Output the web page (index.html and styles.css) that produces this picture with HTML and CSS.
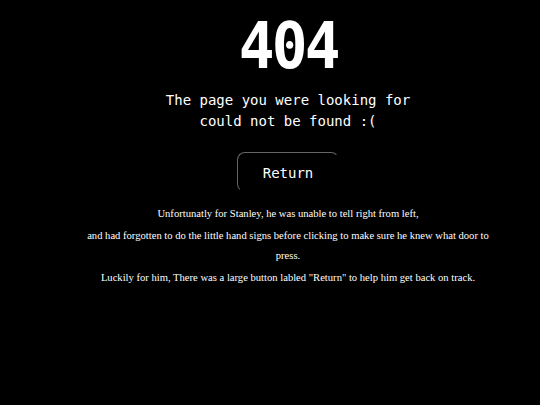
FILE: index.html
```html
<!DOCTYPE html>
<html lang="en">
<head>
<meta charset="utf-8">
<title>404 - Page not found</title>
<link rel="stylesheet" href="styles.css">
</head>
<body>
  <main class="page">
    <h1 class="code">404</h1>
    <h2 class="subtitle">The page you were looking for<br>could not be found :(</h2>
    <a class="return-btn" href="#">Return</a>
    <div class="story">
      <p>Unfortunatly for Stanley, he was unable to tell right from left,</p>
      <p>and had forgotten to do the little hand signs before clicking to make sure he knew what door to press.</p>
      <p>Luckily for him, There was a large button labled "Return" to help him get back on track.</p>
    </div>
  </main>
</body>
</html>
```

FILE: styles.css
```css
html, body {
  margin: 0;
  background: #000;
  color: #fff;
}

body {
  width: 540px;
  height: 405px;
  overflow: hidden;
}

.page {
  display: flex;
  flex-direction: column;
  align-items: center;
  padding-left: 36px;
  padding-top: 14px;
}

.code {
  margin: 0;
  font-family: "DejaVu Sans Mono", monospace;
  font-weight: bold;
  font-size: 64px;
  line-height: 64px;
  letter-spacing: -3px;
  transform: scaleX(0.93);
}

.subtitle {
  margin: 12px 0 0;
  font-family: "DejaVu Sans Mono", monospace;
  font-weight: normal;
  font-size: 14px;
  line-height: 21px;
  text-align: center;
}

.return-btn {
  margin-top: 20px;
  width: 102px;
  height: 40px;
  box-sizing: border-box;
  display: flex;
  align-items: center;
  justify-content: center;
  padding-top: 2px;
  border: 1px solid transparent;
  border-top-color: #666;
  border-left-color: #666;
  border-radius: 8px;
  color: #fff;
  text-decoration: none;
  font-family: "DejaVu Sans Mono", monospace;
  font-size: 14px;
}

.story {
  margin-top: 10px;
  width: 410px;
  font-family: "Liberation Serif", serif;
  font-size: 10.6px;
  line-height: 20px;
  text-align: center;
}

.story p {
  margin: 2px 0 0;
}
```
